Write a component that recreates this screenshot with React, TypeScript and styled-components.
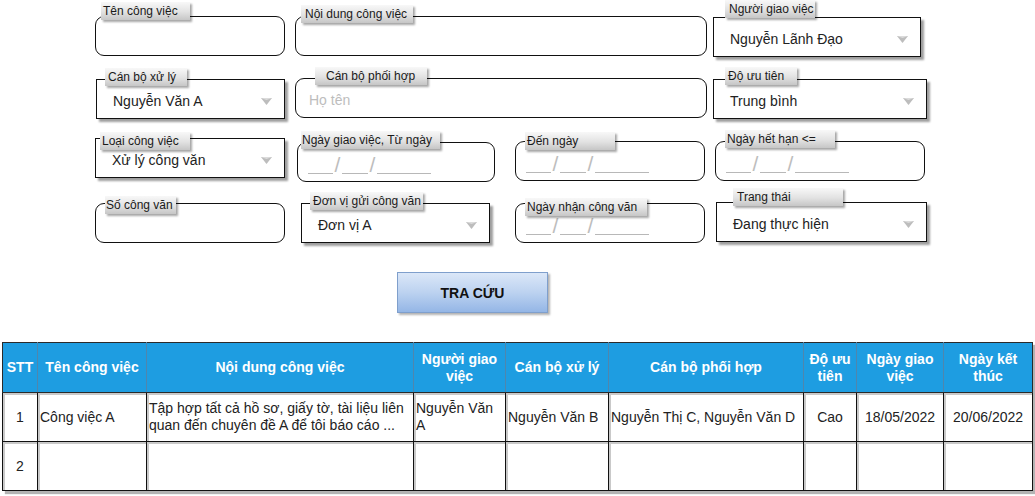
import React from 'react';
import styled, { createGlobalStyle } from 'styled-components';

const Global = createGlobalStyle`
  html, body { margin: 0; padding: 0; background: #fff; }
  body { font-family: "Liberation Sans", Arial, sans-serif; color: #222; }
`;

const Page = styled.div`
  width: 1035px;
  height: 496px;
  overflow: hidden;
  display: flex;
  flex-direction: column;
`;

const Form = styled.div`
  display: grid;
  grid-template-columns: 190px 10px 200px 20px 190px 10px 212px;
  grid-auto-rows: 40px;
  row-gap: 22px;
  padding: 16px 0 0 95px;
`;

const Box = styled.div<{ $col: string; $round: boolean; $ml: number; $mr: number; $mt: number; $date?: boolean }>`
  position: relative;
  grid-column: ${(p) => p.$col};
  align-self: start;
  height: 40px;
  box-sizing: border-box;
  margin: ${(p) => `${p.$mt}px ${p.$mr}px 0 ${p.$ml}px`};
  border: 1px solid #111;
  border-radius: ${(p) => (p.$round ? '9px' : '0')};
  box-shadow: ${(p) => (p.$round ? 'none' : '3px 3px 2px rgba(0,0,0,0.38)')};
  display: flex;
  align-items: ${(p) => (p.$date ? 'flex-end' : 'center')};
  justify-content: space-between;
  padding: ${(p) => (p.$date ? '0 0 7px 10px' : '4px 12px 0 16px')};
  font-size: 14px;
  color: #222;
  background: #fff;
`;

const Label = styled.div<{ $dx: number; $dy: number; $w: number; $pl: number }>`
  position: absolute;
  left: ${(p) => p.$dx - 1}px;
  top: ${(p) => -p.$dy - 1}px;
  width: ${(p) => p.$w}px;
  height: 18px;
  box-sizing: border-box;
  padding-left: ${(p) => p.$pl}px;
  font-size: 12px;
  line-height: 19px;
  color: #1a1a1a;
  white-space: nowrap;
  background: linear-gradient(to bottom, #f8f8f8 0%, #e2e2e2 55%, #c6c6c6 100%);
  box-shadow: 2px 2px 2px rgba(0, 0, 0, 0.35);
`;

const Placeholder = styled.span`
  color: #bdbdbd;
  font-size: 14px;
  margin-left: -3px;
`;

const Blank = styled.span<{ $w: number }>`
  display: inline-block;
  width: ${(p) => p.$w}px;
  height: 1px;
  border-bottom: 1px solid #b8b8b8;
`;

const Slash = styled.span`
  display: inline-block;
  width: 9px;
  text-align: center;
  font-size: 21px;
  line-height: 19px;
  color: #bdbdbd;
`;

const DateMask = styled.div`
  display: flex;
  align-items: flex-end;
`;

const Arrow = () => (
  <svg width="11" height="7" viewBox="0 0 11 7">
    <polygon points="0,0 11,0 5.5,7" fill="#bdbdbd" />
    <polygon points="0,0 11,0 5.5,2" fill="#dcdcdc" />
  </svg>
);

const ButtonRow = styled.div`
  display: flex;
  padding: 30px 0 0 397px;
`;

const SearchButton = styled.button`
  width: 151px;
  height: 41px;
  box-sizing: border-box;
  border: 1px solid #7f9fcc;
  background: linear-gradient(to bottom, #dbe7f8 0%, #bcd2f0 50%, #94b6e6 100%);
  box-shadow: 2px 2px 2px rgba(0, 0, 0, 0.3);
  font-family: "Liberation Sans", Arial, sans-serif;
  font-weight: bold;
  font-size: 14px;
  color: #111;
  cursor: pointer;
`;

const TableWrap = styled.div`
  margin: 29px 0 0 2px;
  width: 1030px;
  box-shadow: 3px 3px 1px #b3b3b3;
`;

const Table = styled.table`
  width: 1030px;
  border-collapse: collapse;
  table-layout: fixed;
  font-size: 14px;
`;

const Th = styled.th`
  height: 49px;
  padding: 0 2px;
  background: #1e9de1;
  color: #fff;
  font-weight: bold;
  font-size: 14px;
  line-height: 17px;
  text-align: center;
  border: 1px solid #2a2a2a;
  border-left-color: #4f86ad;
  border-right-color: #4f86ad;
  &:first-child { border-left-color: #2a2a2a; }
  &:last-child { border-right-color: #2a2a2a; }
`;

const Td = styled.td<{ $center?: boolean }>`
  height: 49px;
  padding: 0 2px;
  box-sizing: border-box;
  border: 1px solid #111;
  box-shadow: inset 2px 2px 0 #c9c9c9;
  text-align: ${(p) => (p.$center ? 'center' : 'left')};
  vertical-align: middle;
  line-height: 17px;
  color: #222;
`;

type FieldDef = {
  label: string;
  col: string;
  kind: 'round' | 'select';
  ml?: number;
  mr?: number;
  mt?: number;
  dx: number;
  dy: number;
  w: number;
  pl: number;
  value?: string;
  placeholder?: string;
  date?: boolean;
};

const fields: FieldDef[] = [
  { label: 'Tên công việc', col: '1', kind: 'round', dx: 6, dy: 14, w: 89, pl: 2 },
  { label: 'Nội dung công việc', col: '3 / 6', kind: 'round', mr: -2, dx: 6, dy: 11, w: 112, pl: 4 },
  { label: 'Người giao việc', col: '7', kind: 'select', ml: -2, mr: 6, mt: 1, dx: 12, dy: 17, w: 90, pl: 4, value: 'Nguyễn Lãnh Đạo' },

  { label: 'Cán bộ xử lý', col: '1', kind: 'select', ml: 1, mt: 1, dx: 9, dy: 11, w: 82, pl: 3, value: 'Nguyễn Văn A' },
  { label: 'Cán bộ phối hợp', col: '3 / 6', kind: 'round', mr: -2, dx: 20, dy: 11, w: 112, pl: 11, placeholder: 'Họ tên' },
  { label: 'Độ ưu tiên', col: '7', kind: 'select', ml: -2, mt: 1, dx: 12, dy: 12, w: 72, pl: 3, value: 'Trung bình' },

  { label: 'Loại công việc', col: '1', kind: 'select', mt: -2, dx: 5, dy: 6, w: 90, pl: 2, value: 'Xử lý công văn' },
  { label: 'Ngày giao việc, Từ ngày', col: '3', kind: 'round', ml: 2, mt: 2, dx: 4, dy: 11, w: 139, pl: 1, date: true },
  { label: 'Đến ngày', col: '5', kind: 'round', mt: 1, dx: 10, dy: 9, w: 90, pl: 2, date: true },
  { label: 'Ngày hết hạn <=', col: '7', kind: 'round', mr: 2, mt: 1, dx: 10, dy: 11, w: 110, pl: 2, date: true },

  { label: 'Số công văn', col: '1', kind: 'round', mt: 1, dx: 10, dy: 7, w: 71, pl: 1 },
  { label: 'Đơn vị gửi công văn', col: '3', kind: 'select', ml: 6, mr: 5, mt: 1, dx: 9, dy: 11, w: 113, pl: 3, value: 'Đơn vị A' },
  { label: 'Ngày nhận công văn', col: '5', kind: 'round', mt: 1, dx: 10, dy: 5, w: 122, pl: 2, date: true },
  { label: 'Trang thái', col: '7', kind: 'select', ml: 1, dx: 17, dy: 14, w: 110, pl: 4, value: 'Đang thực hiện' },
];

const DateBlanks = () => (
  <DateMask>
    <Blank $w={25} />
    <Slash>/</Slash>
    <Blank $w={26} />
    <Slash>/</Slash>
    <Blank $w={54} />
  </DateMask>
);

const Field = ({ f }: { f: FieldDef }) => (
  <Box
    $col={f.col}
    $round={f.kind === 'round'}
    $ml={f.ml ?? 0}
    $mr={f.mr ?? 0}
    $mt={f.mt ?? 0}
    $date={f.date}
  >
    <Label $dx={f.dx} $dy={f.dy} $w={f.w} $pl={f.pl}>
      {f.label}
    </Label>
    {f.kind === 'select' && (
      <>
        <span>{f.value}</span>
        <Arrow />
      </>
    )}
    {f.placeholder && <Placeholder>{f.placeholder}</Placeholder>}
    {f.date && <DateBlanks />}
  </Box>
);

const colWidths = [35, 109, 267, 92, 103, 195, 53, 87, 89];

const headers = [
  'STT',
  'Tên công việc',
  'Nội dung công việc',
  'Người giao việc',
  'Cán bộ xử lý',
  'Cán bộ phối hợp',
  'Độ ưu tiên',
  'Ngày giao việc',
  'Ngày kết thúc',
];

const headerNodes: React.ReactNode[] = [
  'STT',
  'Tên công việc',
  'Nội dung công việc',
  <>Người giao<br />việc</>,
  'Cán bộ xử lý',
  'Cán bộ phối hợp',
  <>Độ ưu<br />tiên</>,
  <>Ngày giao<br />việc</>,
  <>Ngày kết<br />thúc</>,
];

export default function App() {
  return (
    <Page>
      <Global />
      <Form>
        {fields.map((f) => (
          <Field key={f.label} f={f} />
        ))}
      </Form>
      <ButtonRow>
        <SearchButton>TRA CỨU</SearchButton>
      </ButtonRow>
      <TableWrap>
        <Table>
          <colgroup>
            {colWidths.map((w, i) => (
              <col key={i} style={{ width: w }} />
            ))}
          </colgroup>
          <thead>
            <tr>
              {headerNodes.map((h, i) => (
                <Th key={headers[i]}>{h}</Th>
              ))}
            </tr>
          </thead>
          <tbody>
            <tr>
              <Td $center>1</Td>
              <Td>Công việc A</Td>
              <Td>
                Tập hợp tất cả hồ sơ, giấy tờ, tài liệu liên
                <br />
                quan đến chuyên đề A để tôi báo cáo ...
              </Td>
              <Td>
                Nguyễn Văn
                <br />A
              </Td>
              <Td>Nguyễn Văn B</Td>
              <Td>Nguyễn Thị C, Nguyễn Văn D</Td>
              <Td $center>Cao</Td>
              <Td $center>18/05/2022</Td>
              <Td $center>20/06/2022</Td>
            </tr>
            <tr>
              <Td $center>2</Td>
              <Td />
              <Td />
              <Td />
              <Td />
              <Td />
              <Td />
              <Td />
              <Td />
            </tr>
          </tbody>
        </Table>
      </TableWrap>
    </Page>
  );
}
